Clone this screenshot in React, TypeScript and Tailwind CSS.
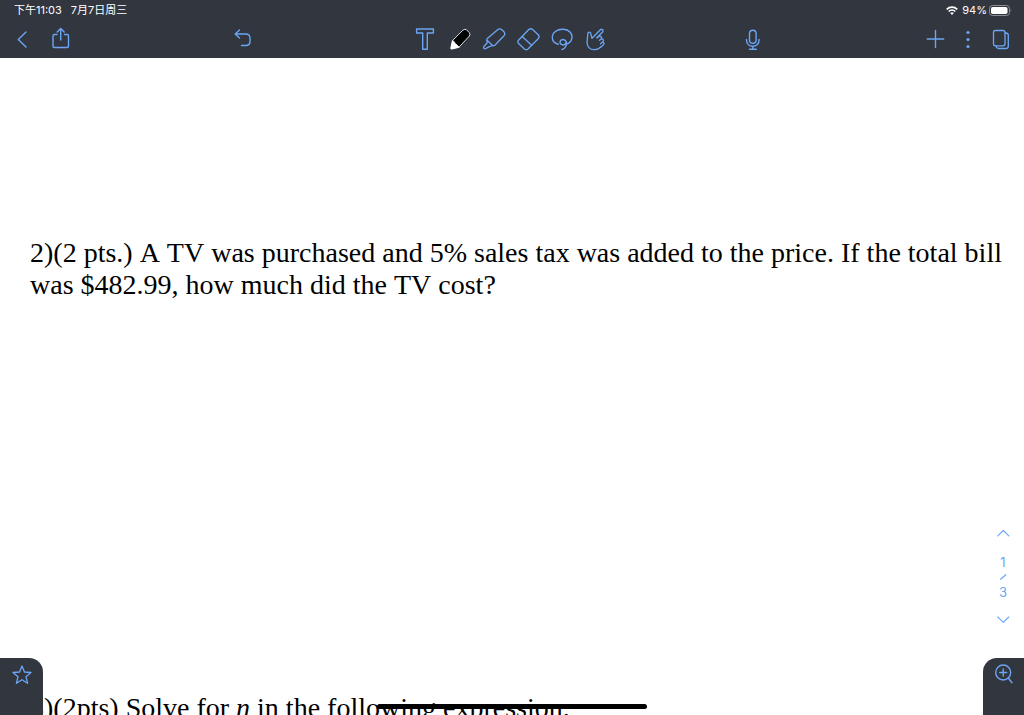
import type { ReactNode } from "react";

function Icon({ children, width = 1.4 }: { children: ReactNode; width?: number }) {
  return (
    <svg
      viewBox="0 0 24 24"
      className="size-6 shrink-0"
      fill="none"
      stroke="currentColor"
      strokeWidth={width}
      strokeLinecap="round"
      strokeLinejoin="round"
      aria-hidden="true"
    >
      {children}
    </svg>
  );
}

function ToolButton({ label, children }: { label: string; children: ReactNode }) {
  return (
    <button type="button" aria-label={label} className="flex h-[38px] w-[34px] items-center justify-center">
      {children}
    </button>
  );
}

function StatusBar() {
  return (
    <div className="flex h-5 items-center justify-between pr-3 pl-[14px] font-['Inter','Noto_Sans_CJK_SC',sans-serif] text-[11px] leading-5 text-white">
      <div className="flex gap-[9px]">
        <span>下午11:03</span>
        <span>7月7日周三</span>
      </div>
      <div className="flex items-center gap-1">
        <svg viewBox="0 0 12 9" className="h-[9px] w-3" fill="none" stroke="white" strokeWidth="1.7" aria-hidden="true">
          <path d="M.7 3.3C3.7.4 8.3.4 11.3 3.3" />
          <path d="M2.7 5.5C4.6 3.7 7.4 3.7 9.3 5.5" />
          <path d="M4.2 7.1Q6 5.5 7.8 7.1L6 8.9Z" fill="white" stroke="none" />
        </svg>
        <div className="flex items-center gap-0.5">
          <span>94%</span>
          <svg viewBox="0 0 23 11" className="h-[11px] w-[23px]" aria-hidden="true">
            <rect x=".5" y=".5" width="20" height="10" rx="3" fill="none" stroke="#8b8e94" />
            <rect x="2" y="2" width="16.5" height="7" rx="1.8" fill="white" />
            <path d="M21.7 3.8Q23 5.5 21.7 7.2Z" fill="#8b8e94" />
          </svg>
        </div>
      </div>
    </div>
  );
}

function Toolbar() {
  return (
    <nav aria-label="Tools" className="grid h-[38px] grid-cols-[1fr_auto_1fr] text-[#6ba6f5]">
      <div className="flex justify-between pr-[149px] pl-[5px]">
        <div className="flex gap-[5px]">
          <ToolButton label="Back">
            <Icon><path d="M16 5L8.3 12.5 16 20" /></Icon>
          </ToolButton>
          <ToolButton label="Share">
            <Icon>
              <path d="M8 7.5H5.5Q4 7.5 4 9V19Q4 20.5 5.5 20.5H18Q19.5 20.5 19.5 19V9Q19.5 7.5 18 7.5H15.5" />
              <path d="M11.7 13V1.7M8.2 5L11.7 1.5 15.2 5" />
            </Icon>
          </ToolButton>
        </div>
        <ToolButton label="Undo">
          <Icon><path d="M8.5 3L4.2 7 8.5 11M4.5 7H14.5Q19 7 19 11V14.5Q19 18.5 14.5 18.5H10.5" /></Icon>
        </ToolButton>
      </div>

      <div className="flex pr-0.5">
        <ToolButton label="Text">
          <Icon><path d="M2.6 2H19.4V6H13.3V22.3H8.7V6H2.6Z" /></Icon>
        </ToolButton>
        <ToolButton label="Pen">
          <Icon width={1}>
            <path d="M4.5 13.5L2.8 21.2Q2.8 22.3 4 22L11 20.3Z" fill="#fff" stroke="#fff" />
            <path d="M4.6 13.5L15 3.1Q17 1.3 18.8 3.1L21.3 5.5Q22.8 7.3 21.2 9.2L11 20.2Z" fill="#000" stroke="#d8dade" />
            <path d="M4.6 14L3 21.8 10.8 20 9 17.8 7.2 17 6.4 15Z" fill="#fff" stroke="#fff" strokeWidth=".5" />
          </Icon>
        </ToolButton>
        <ToolButton label="Highlighter">
          <Icon width={1.3}>
            <path d="M5.3 11.6L15.3 2.9Q17.8 1 19.8 2.7L22 4.8Q23.7 6.8 21.8 9L12.8 18.2Q11.6 19.3 10.4 18.3L5.3 13.6Q4.3 12.5 5.3 11.6Z" />
            <path d="M4.9 13.3L5.2 15.8 1.7 19.8Q1.2 21.8 3.3 21.8L6.8 19.9 10.6 18.5" />
          </Icon>
        </ToolButton>
        <ToolButton label="Eraser">
          <Icon width={1.3}>
            <path d="M2.5 13.2L12.8 2.5Q14.7 1 16.6 2.5L22.4 8Q23.8 9.7 22.4 11.5L12 22Q10.2 23.4 8.4 22L2.6 16.6Q1.1 14.8 2.5 13.2Z" />
            <path d="M6.2 9.5L15.6 18.3" />
          </Icon>
        </ToolButton>
        <ToolButton label="Lasso">
          <Icon>
            <path d="M8.3 17.2C1 15.5.8 8 5.4 4.5 9.7 1.2 16.8 1.6 20 5 23.5 9 22.3 15.7 16.2 17" />
            <path d="M11.2 17.3C8.9 16 9.9 12.6 12.8 12.5 16.3 12.4 17.4 16.5 15.9 19.2 15 21 13.8 22.2 12 22.5" />
            <path d="M16 15.8C15.5 17.7 12.7 18.6 11.2 17.3" />
          </Icon>
        </ToolButton>
        <ToolButton label="Gesture">
          <Icon width={1.3}>
            <path d="M8 11.3L16.4 2.8C17.9 1.4 20 3.5 18.6 5L13 10.7M8 11.3L6.7 6.3C6.1 4.6 3.7 5 3.8 6.9L3.1 15.3C2.8 19.7 6 22.7 10 22.7 12.9 22.7 14.9 21.8 16.6 20.2" />
            <path d="M13 10.7L14.8 9.5C16.8 8.3 18.6 10.4 17 12L15.4 13.4M17 12C19.2 11.4 20.4 13.7 18.6 15.1L16.5 16.8M18.6 15.1C20.4 15.5 20.4 17.4 19 18.3L16.6 20.2" />
          </Icon>
        </ToolButton>
      </div>

      <div className="flex justify-between pr-[6px] pl-[121px]">
        <ToolButton label="Record audio">
          <Icon>
            <rect x="8.5" y="3.2" width="6.6" height="13" rx="3.3" />
            <path d="M5.5 12.5V13C5.5 21.3 18.1 21.3 18.1 13V12.5M11.8 19.2V22.2M8.5 22.3H15.3" />
          </Icon>
        </ToolButton>
        <div className="flex">
          <ToolButton label="Add">
            <Icon><path d="M6.2 12H22.7M14.5 3.5V20.5" /></Icon>
          </ToolButton>
          <ToolButton label="More">
            <Icon>
              <g fill="currentColor" stroke="none">
                <circle cx="13" cy="5.5" r="1.6" />
                <circle cx="13" cy="12.5" r="1.6" />
                <circle cx="13" cy="19.5" r="1.6" />
              </g>
            </Icon>
          </ToolButton>
          <ToolButton label="Pages">
            <Icon width={1.3}>
              <rect x="4.5" y="3.5" width="11.5" height="15.3" rx="2" />
              <path d="M16 6H17Q19.3 6 19.3 8.3V19Q19.3 21.5 17 21.5H9.8Q7.4 21.5 7 19" />
            </Icon>
          </ToolButton>
        </div>
      </div>
    </nav>
  );
}

function Pager() {
  return (
    <div className="absolute right-2 bottom-[82px] flex w-[26px] flex-col items-center font-['Inter',sans-serif] text-[13px] leading-[14px] text-[#6ba6f5]">
      <button type="button" aria-label="Previous page" className="mb-[10px]">
        <Icon width={1.1}><path d="M6.8 14.8L12.3 9.5 17.8 14.8" /></Icon>
      </button>
      <span>1</span>
      <svg viewBox="0 0 10 16" className="h-4 w-[10px]" stroke="currentColor" strokeWidth="1.2" aria-hidden="true">
        <path d="M2.2 10.5L8.2 5.5" />
      </svg>
      <span>3</span>
      <button type="button" aria-label="Next page" className="mt-[10px]">
        <Icon width={1.1}><path d="M6.8 8L12.3 13.3 17.8 8" /></Icon>
      </button>
    </div>
  );
}

export default function App() {
  return (
    <div className="flex h-screen flex-col overflow-hidden bg-white">
      <header className="shrink-0 bg-[#32363f]">
        <StatusBar />
        <Toolbar />
      </header>

      <main className="relative min-h-0 flex-1 overflow-hidden">
        <article className="pt-[179px] pl-[30px] font-['Liberation_Serif',serif] text-[28px] leading-8 text-black [font-kerning:none]">
          <p className="whitespace-nowrap">
            2)(2 pts.) A TV was purchased and 5% sales tax was added to the price. If the total bill
            <br />
            was $482.99, how much did the TV cost?
          </p>
          <p className="mt-[391px]">
            3)(2pts) Solve for <i>n</i> in the following expression.
          </p>
        </article>

        <Pager />

        <button
          type="button"
          aria-label="Favorites"
          className="absolute bottom-0 left-0 flex h-[57px] w-[43px] justify-center rounded-tr-[14px] bg-[#32363f] pt-[5px] text-[#6ba6f5]"
        >
          <Icon width={1.3}>
            <path d="M12 3L14.5 9 21 9.5 16 13.7 17.6 20.3 12 16.7 6.4 20.3 8 13.7 3 9.5 9.5 9Z" />
          </Icon>
        </button>
        <button
          type="button"
          aria-label="Zoom in"
          className="absolute right-0 bottom-0 flex h-[57px] w-[41px] justify-center rounded-tl-[14px] bg-[#32363f] pt-[5px] text-[#6ba6f5]"
        >
          <Icon>
            <circle cx="11.2" cy="9.5" r="7.5" />
            <path d="M11.2 6V13M7.7 9.5H14.7M16.3 15L20 19.8" />
          </Icon>
        </button>
        <div className="absolute bottom-[6px] left-1/2 h-[5px] w-[270px] -translate-x-1/2 rounded-full bg-black" />
      </main>
    </div>
  );
}
